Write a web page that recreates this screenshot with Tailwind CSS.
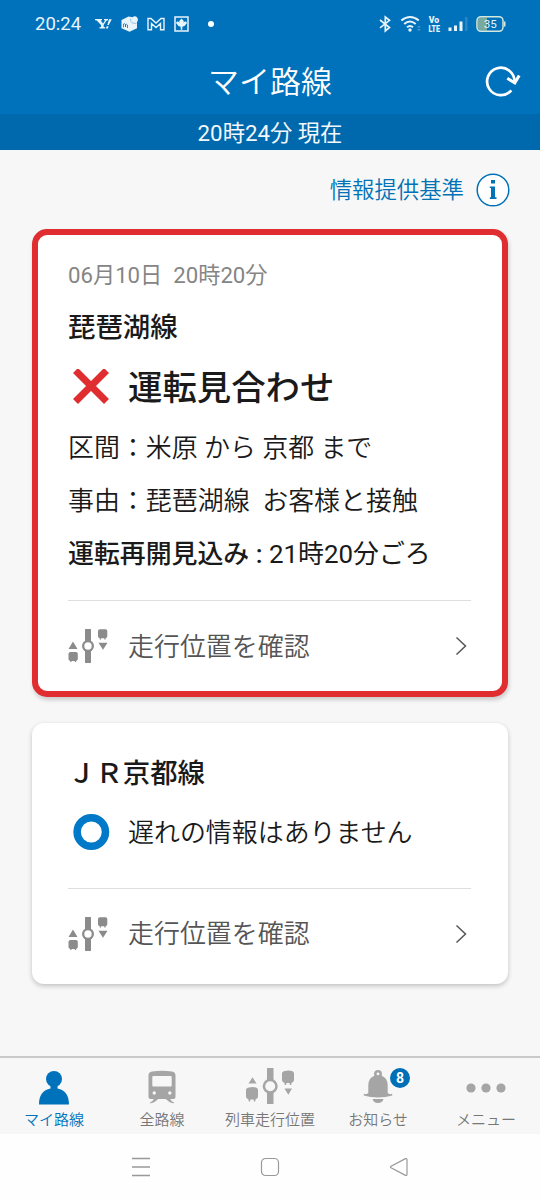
<!DOCTYPE html>
<html lang="ja">
<head>
<meta charset="utf-8">
<title>マイ路線</title>
<script src="https://cdn.jsdelivr.net/npm/@tailwindcss/browser@4"></script>
</head>
<body class="w-[540px] h-[1200px] overflow-hidden bg-[#f7f7f7] flex flex-col text-[#1a1a1a] font-[350] font-[Roboto,'Noto_Sans_CJK_JP',sans-serif]">
<svg class="hidden">
  <symbol id="pos" viewBox="0 0 40 34">
    <path d="M17 0h6v34h-6z" fill="currentColor"/>
    <circle cx="20" cy="17" r="6" fill="currentColor"/><circle cx="20" cy="17" r="3.700" fill="#fff"/>
    <path d="M.5 20L5 12.500 9.500 20zM30.500 13.700H39.500l-4.500 7.100z" fill="currentColor"/>
    <path d="M2.500 23h5.500q1.800 0 1.800 1.800V30q0 1.500-1.500 1.800L8 33H6.800v-1H3.500v1H2.300L2 31.800Q.5 31.500 .5 30v-5.200Q.5 23 2.500 23zM32 .3h5.500q1.800 0 1.800 1.800v5.200q0 1.500-1.500 1.800L37.500 10.500h-1.200V9.300H33v1.200h-1.200L31.500 9.100Q30 8.800 30 7.300V2.100Q30 .3 32 .3z" fill="currentColor"/>
  </symbol>
</svg>

<header class="bg-[#0072bb] text-white h-[150px] shrink-0 flex flex-col font-normal">
  <div class="h-12 flex items-center justify-between pl-[35px] pr-[34px]">
    <div class="flex items-center">
      <span class="text-[18.500px] leading-none w-[60px] whitespace-nowrap text-[#e9f4fb]">20:24</span>
      <svg class="w-[100px] h-4" viewBox="0 0 100 16" fill="#e9f4fb">
        <path d="M0 3h7v1.300l-1.300.2L8 7.500l2.200-3-1.200-.2V3h4v1.200l-1.300.4L8.700 8.800v2.200l1.500.3v1.200H4.500v-1.200l1.500-.3V8.900L1.700 4.500 0 4.200zM14 3.300h2.800L13.800 9h-1.500zM11.600 10.300h2l-.7 2.200h-2z"/>
        <path d="M26.500 4l7-3.500 4 .8q2.500-2 4.700.3 1.500 2.500-.2 4.400v6.300l-7.500 3.500-8-3.500z"/><path d="M35.700 2.500q-.8 4 2.800 4.800h3" fill="none" stroke="#7fb9de" stroke-width=".8"/><path d="M28.500 11.300V8q1.400-.8 2 .5v2.500V8.500q1.300-.8 2 .5v3" fill="none" stroke="#0072bb" stroke-width=".8"/>
        <path d="M53 2.500h3L61 7l5-4.500h3v11.200h-3.500V7.500L61 11.500l-4.500-4v6.200H53z" fill="none" stroke="#e9f4fb" stroke-width="1.400"/>
        <path d="M80 1h13v14H80z" fill="none" stroke="#e9f4fb" stroke-width="1.500"/><path d="M86.500 2.500l2.500 2.700-1 1.200 2.800-1.200 1.200 1.800-2.500 3-2.200.7v3h-1.600v-3l-2.200-.7-2.500-3 1.200-1.800 2.800 1.200-1-1.200z"/>
      </svg>
      <span class="w-[6px] h-[6px] rounded-full bg-white ml-[13px]"></span>
    </div>
    <svg class="w-[128px] h-[18px]" viewBox="378 15 128 18">
      <path d="M380 20l9.500 7.500L385.300 31V17l4.200 3.300-9.500 7.500" fill="none" stroke="#e9f4fb" stroke-width="1.700"/>
      <g fill="none" stroke="#e9f4fb" stroke-width="2"><path d="M401.300 20.500q9-7 17.500 0M404.200 24q5.700-5 11.500 0M407 27.300q3-2.500 6 0"/></g>
      <circle cx="410" cy="30" r="1.700" fill="#e9f4fb"/><path d="M417 27.500l2-2 2 2zM417 29l2 2 2-2z" fill="#4596ce"/>
      <text x="428.700" y="23.100" textLength="10.500" lengthAdjust="spacingAndGlyphs" font-family="Roboto" font-size="9" font-weight="900" fill="#e9f4fb">Vo</text>
      <text x="428.500" y="31.700" textLength="11.500" lengthAdjust="spacingAndGlyphs" font-family="Roboto" font-size="9" font-weight="900" fill="#e9f4fb">LTE</text>
      <path d="M448.500 27.500h3V31h-3zM454 25.500h3V31h-3zM459.500 21.500h3V31h-3z" fill="#e9f4fb"/><path d="M465 17h2.500v14H465z" fill="#2c86c5"/>
      <path d="M481 17.500h6v13h-6q-3 0-3-3v-7q0-3 3-3z" fill="#79a99c"/>
      <rect x="477" y="16.700" width="26" height="14.600" rx="4" fill="none" stroke="#d5e8dd" stroke-width="1.500"/><path d="M504 21.500h1.500v5H504z" fill="#d5e8dd"/>
      <text x="490.300" y="28" text-anchor="middle" font-family="Roboto" font-size="11.500" fill="#e9f4fb">35</text>
    </svg>
  </div>
  <div class="h-[66px] grid grid-cols-[1fr_auto_1fr] items-center">
    <span></span>
    <h1 class="text-[31px] leading-none pt-0.5 font-[350]">マイ路線</h1>
    <svg class="justify-self-end mr-[18px] w-[38px] h-[36px]" viewBox="0 0 38 36" fill="none" stroke="#fff" stroke-width="2.700">
      <path d="M27.300 27.300A13.700 13.700 0 1 1 30.500 19"/><path d="M23.300 15.300L30.800 20l4.400-7.500" stroke-width="3"/>
    </svg>
  </div>
  <div class="h-9 pt-0.5 bg-[#0069ad] flex items-center justify-center text-[22.300px] leading-none text-[#f2f8fc]">20時24分 現在</div>
</header>

<main class="h-[906px] shrink-0 px-8">
  <div class="h-[79px] flex items-center justify-end gap-3 text-[#0072b5] text-[22.400px] leading-none">
    <span class="pt-0.5">情報提供基準</span>
    <svg class="w-[34px] h-[34px] mr-[-2px]" viewBox="0 0 34 34"><circle cx="17" cy="17" r="15.800" fill="#fff" stroke="currentColor" stroke-width="1.500"/><path d="M15 7h4v3.500h-4zM13.800 13.500H19v10.800h1.500V26h-6.700v-1.700H15V15h-1.200z" fill="currentColor"/></svg>
  </div>

  <section class="h-[468px] rounded-[15px] border-6 border-[#e02d2f] bg-white px-[30px] pt-5 shadow-[1px_3px_4px_rgba(0,0,0,0.18)]">
    <p class="h-10 flex items-center text-[22.200px] leading-none font-normal text-[#858585] whitespace-pre">06月10日  20時20分</p>
    <h2 class="mt-[10px] h-11 pt-1 flex items-center text-[27.400px] leading-none font-medium">琵琶湖線</h2>
    <div class="mt-[10px] h-14 flex items-center">
      <svg class="w-[60px] h-9 shrink-0" viewBox="0 0 60 36"><path d="M7.500 1.500l31 31M38.500 1.500l-31 31" stroke="#e02d2f" stroke-width="7"/></svg>
      <span class="text-[34.400px] leading-none font-medium whitespace-nowrap pt-0.5">運転見合わせ</span>
    </div>
    <p class="mt-[5px] h-[53px] pt-1 flex items-center text-[25.950px] leading-none whitespace-pre">区間：米原 から 京都 まで</p>
    <p class="h-[53px] pt-1 flex items-center text-[25.950px] leading-none whitespace-pre">事由：琵琶湖線  お客様と接触</p>
    <p class="h-[53px] pt-1 flex items-center text-[25.900px] leading-none font-normal whitespace-pre"><span class="font-medium">運転再開見込み : </span>21時20分ごろ</p>
    <div class="mt-[21px] h-[90px] border-t border-[#dedede] flex items-center text-[25.950px] leading-none text-[#555] w-[403px]">
      <svg class="w-[40px] h-[34px] mr-5 text-[#8b8b8b]"><use href="#pos"/></svg>
      <span class="pt-1">走行位置を確認</span>
      <svg class="ml-auto mr-[4px] w-3 h-5" viewBox="0 0 12 20" fill="none" stroke="#555" stroke-width="1.500"><path d="M1.500 1.500L10.500 10l-9 8.500"/></svg>
    </div>
  </section>

  <section class="mt-[26px] h-[261px] rounded-[12px] bg-white px-9 pt-7 shadow-[0_2px_5px_rgba(0,0,0,0.22)]">
    <h2 class="h-11 pt-1 flex items-center text-[27.400px] leading-none font-medium">ＪＲ京都線</h2>
    <div class="mt-[9px] h-14 flex items-center">
      <svg class="w-[60px] h-9 shrink-0" viewBox="0 0 60 36"><circle cx="23.300" cy="18" r="14.200" fill="none" stroke="#0079c9" stroke-width="7.500"/></svg>
      <span class="text-[25.950px] leading-none whitespace-nowrap pt-1">遅れの情報はありません</span>
    </div>
    <div class="mt-[28px] h-[90px] border-t border-[#dedede] flex items-center text-[25.950px] leading-none text-[#555] w-[403px]">
      <svg class="w-[40px] h-[34px] mr-5 text-[#8b8b8b]"><use href="#pos"/></svg>
      <span class="pt-0.5">走行位置を確認</span>
      <svg class="ml-auto mr-[4px] w-3 h-5" viewBox="0 0 12 20" fill="none" stroke="#555" stroke-width="1.500"><path d="M1.500 1.500L10.500 10l-9 8.500"/></svg>
    </div>
  </section>
</main>

<nav class="h-[78px] shrink-0 border-t-2 border-[#c9c9c9] grid grid-cols-5 text-[15px] leading-none text-[#777] text-center">
  <div class="flex flex-col items-center pt-[9px] text-[#0072bb]">
    <svg class="w-[60px] h-[40px]" viewBox="0 0 60 40" fill="currentColor"><circle cx="30" cy="12" r="8"/><path d="M26.500 17h7v4.500C41 23 45 28 45 37.500H15C15 28 19 23 26.500 21.500z"/></svg>
    <span class="mt-1.5">マイ路線</span>
  </div>
  <div class="flex flex-col items-center pt-[9px]">
    <svg class="w-[60px] h-[40px]" viewBox="0 0 60 40" fill="#a5a5a5"><path fill-rule="evenodd" d="M20 4.500q10-1.500 20 0 3.500.7 3.500 4V30q0 2-2 2H18.500q-2 0-2-2V8.500q0-3.300 3.500-4zM20.300 10v8.500q0 1 1 1h17.400q1 0 1-1V10q0-1-1-1H21.300q-1 0-1 1zm1.900 14.300a1.700 1.700 0 1 0 .1 0zm15.600 0a1.700 1.700 0 1 0 .1 0z"/><path d="M22.500 31h5l-5 4q-2 1.500-5 1 3-1 5-5zM32.500 31h5q2 4 5 5-3 .5-5-1z"/></svg>
    <span class="mt-1.5">全路線</span>
  </div>
  <div class="flex flex-col items-center pt-[9px] whitespace-nowrap">
    <svg class="w-[60px] h-[40px]" viewBox="0 0 60 40" fill="#a5a5a5"><path d="M27 1h6.500v36H27z"/><circle cx="30.200" cy="19.200" r="7.500"/><circle cx="30.200" cy="19.200" r="5" fill="#f7f7f7"/><path d="M8.500 16.500l4-6.300 4 6.300zM44.500 21.500h7.500l-3.700 6.200z"/><path d="M9 20.500q3.500-1 7 0 2 .5 2 2.500v6.500q0 2.300-2.300 2.800l-.6 2.200h-1.200l-.3-2h-3.200l-.3 2H8.900l-.6-2.200Q6 31.800 6 29.500V23q0-2 3-2.500zM45 4q3.500-1 7 0 2 .5 2 2.500V13q0 2.300-2.300 2.800l-.6 2.200h-1.200l-.3-2h-3.200l-.3 2h-1.200l-.6-2.200Q42 15.300 42 13V6.500Q42 4.500 45 4z"/></svg>
    <span class="mt-1.5">列車走行位置</span>
  </div>
  <div class="flex flex-col items-center pt-[9px] relative">
    <svg class="w-[60px] h-[40px]" viewBox="0 0 60 40" fill="#a5a5a5"><circle cx="30" cy="7" r="2.700" fill="none" stroke="#a5a5a5" stroke-width="2.500"/><path d="M27 8.500h6q6.700 2 6.700 10V26q1.500 1.800 4.500.8v1.700Q38 30.500 30 30.500t-14.200-2v-1.700q3 1 4.500-.8v-7.500q0-8 6.700-10zM24.500 32h11q-1 4-5.500 4t-5.500-4z"/></svg>
    <span class="mt-1.5">お知らせ</span>
    <b class="absolute left-[66px] top-[10px] w-5 h-5 rounded-full bg-[#006fb5] text-white text-[14px] flex items-center justify-center">8</b>
  </div>
  <div class="flex flex-col items-center pt-[9px]">
    <svg class="w-[60px] h-[40px]" viewBox="0 0 60 40" fill="#a5a5a5"><circle cx="15" cy="21" r="4.600"/><circle cx="30" cy="21" r="4.600"/><circle cx="45" cy="21" r="4.600"/></svg>
    <span class="mt-1.5">メニュー</span>
  </div>
</nav>

<footer class="h-[66px] shrink-0 bg-[#fefefe] flex items-center justify-center gap-[109px]">
  <svg class="w-5 h-5" viewBox="0 0 20 20" stroke="#999" stroke-width="1.600"><path d="M1 1.500h18M1 10h18M1 18.500h18"/></svg>
  <svg class="w-5 h-5" viewBox="0 0 20 20" fill="none" stroke="#999" stroke-width="1.200"><rect x="1.500" y="1.500" width="17" height="17" rx="4"/></svg>
  <svg class="w-5 h-5" viewBox="0 0 20 20" fill="none" stroke="#999" stroke-width="1.200" stroke-linejoin="round"><path d="M2 9.200q-1 .8 0 1.600l14.500 7.600q1.500.4 1.500-1V2.600q0-1.400-1.500-1z"/></svg>
</footer>
</body>
</html>
